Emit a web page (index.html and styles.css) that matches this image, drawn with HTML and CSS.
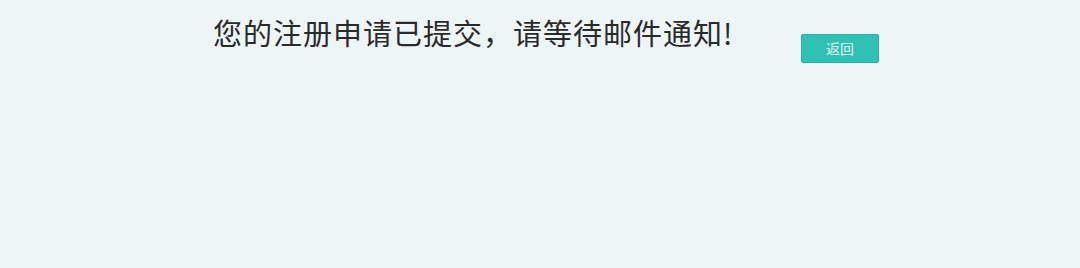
FILE: index.html
```html
<!DOCTYPE html>
<html lang="zh-CN">
<head>
<meta charset="utf-8">
<title>注册成功</title>
<link rel="stylesheet" href="styles.css">
</head>
<body>
<div class="wrap">
  <h1 class="msg">您的注册申请已提交，请等待邮件通知!</h1>
  <a class="btn-back" href="#">返回</a>
</div>
</body>
</html>
```
FILE: styles.css
```css
html, body {
  margin: 0;
  padding: 0;
  background: #eef5f7;
  height: 100%;
}
.wrap {
  width: 680px;
  margin: 0 auto;
  display: flex;
  align-items: flex-start;
  padding-left: 13px;
  padding-right: 1px;
  box-sizing: border-box;
}
.msg {
  margin: 12px 0 0 0;
  font-family: "Noto Sans CJK SC", "Liberation Serif", serif;
  font-size: 29px;
  line-height: 40px;
  font-weight: 400;
  letter-spacing: 1px;
  color: #2a2a2a;
}
.btn-back {
  margin-left: auto;
  margin-top: 34px;
  width: 78px;
  height: 29px;
  box-sizing: border-box;
  background: #2ec1b4;
  border: 1px solid #29b3a7;
  border-radius: 2px;
  color: #e8f7f5;
  font-family: "Noto Sans CJK SC", "Noto Sans", sans-serif;
  font-size: 14px;
  line-height: 27px;
  text-align: center;
  text-decoration: none;
}
```
